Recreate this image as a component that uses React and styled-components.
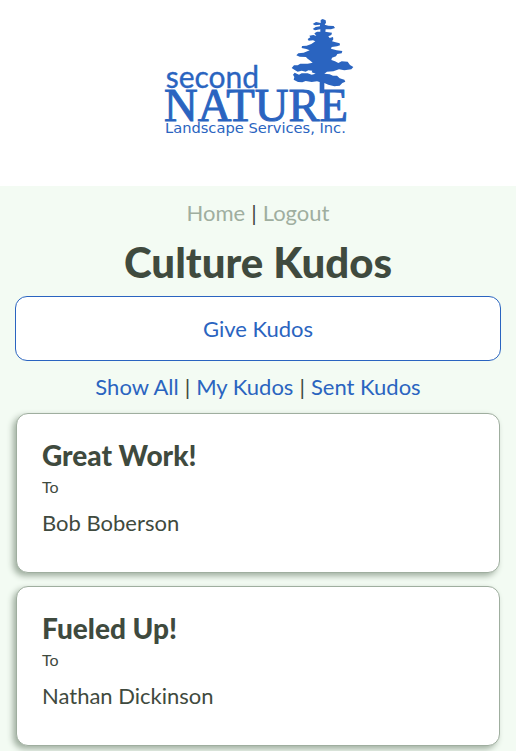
import React from "react";
import styled, { createGlobalStyle, ThemeProvider } from "styled-components";

const theme = {
  blue: "#2a64c0",
  ink: "#3f4a3e",
  sage: "#9fae9f",
  mint: "#f3fbf3",
  white: "#ffffff",
};

const GlobalStyle = createGlobalStyle`
  *, *::before, *::after { box-sizing: border-box; }
  body {
    margin: 0;
    background: ${theme.mint};
    color: ${theme.ink};
    font-family: Lato, "Gill Sans", sans-serif;
    font-size: 22px;
    line-height: 30px;
  }
`;

const Header = styled.header`
  display: flex;
  justify-content: center;
  padding: 10px 0 41px;
  background: ${(p) => p.theme.white};
`;

const LogoArt = styled.svg`
  display: block;
  width: 206px;
  height: 135px;
  fill: ${(p) => p.theme.blue};
`;

const LogoText = styled.text`
  font-family: ${(p) => p.$family};
  font-size: ${(p) => p.$size}px;
  stroke: ${(p) => p.theme.blue};
  stroke-width: ${(p) => p.$weight || 0};
`;

const Main = styled.main`
  display: flex;
  flex-direction: column;
  padding: 12px 15px;
`;

const LinkBar = styled.nav`
  display: flex;
  justify-content: center;
  gap: 6px;
`;

const BarLink = styled.a`
  color: ${(p) => (p.$muted ? p.theme.sage : p.theme.blue)};
  text-decoration: none;
`;

const Title = styled.h1`
  margin: 8px 0;
  font-size: 42px;
  font-weight: 900;
  line-height: 52px;
  text-align: center;
`;

const GiveButton = styled.button`
  height: 65px;
  margin-bottom: 11px;
  border: 1px solid ${(p) => p.theme.blue};
  border-radius: 12px;
  background: ${(p) => p.theme.white};
  color: ${(p) => p.theme.blue};
  font: inherit;
  cursor: pointer;
`;

const CardList = styled.ul`
  display: flex;
  flex-direction: column;
  gap: 13px;
  margin: 11px 1px 0;
  padding: 0;
  list-style: none;
`;

const Card = styled.li`
  padding: 24px 25px 34px;
  border: 1px solid ${(p) => p.theme.sage};
  border-radius: 12px;
  background: ${(p) => p.theme.white};
  box-shadow: -3px 3px 6px ${(p) => p.theme.sage};
`;

const CardTitle = styled.h2`
  margin: 0;
  font-size: 28px;
  font-weight: 900;
  line-height: 34px;
`;

const Label = styled.p`
  margin: 0 0 6px;
  font-size: 16px;
  line-height: 30px;
`;

const Name = styled.p`
  margin: 0;
`;

function Logo() {
  return (
    <LogoArt viewBox="0 0 618 405" role="img" aria-label="Second Nature Landscape Services, Inc.">
      <path d="M497 30 L503 27 L512 31 L513 38 L509 44 L520 47 L536 48 L540 54 L528 58 L512 58 L511 65 L520 67 L531 68 L529 75 L520 79 L524 84 L534 81 L535 88 L531 94 L542 97 L554 100 L555 106 L546 109 L530 111 L528 116 L545 121 L562 123 L560 130 L547 132 L543 139 L531 143 L529 150 L540 154 L550 159 L560 154 L578 155 L585 165 L595 171 L589 178 L568 181 L552 178 L535 184 L516 185 L508 191 L524 193 L534 197 L546 197 L554 205 L568 209 L571 215 L562 219 L554 227 L538 229 L520 224 L508 219 L508 250 L494 250 L494 216 L486 214 L470 216 L452 213 L442 217 L429 216 L416 209 L418 201 L414 194 L419 188 L432 194 L440 190 L458 190 L470 194 L482 191 L470 187 L472 182 L460 181 L452 185 L440 182 L428 185 L418 179 L410 174 L417 166 L428 166 L436 161 L458 161 L473 158 L466 152 L456 145 L453 141 L434 140 L424 136 L430 130 L446 128 L464 121 L454 117 L440 114 L441 108 L455 107 L469 102 L481 94 L474 91 L461 92 L458 87 L466 82 L463 77 L475 75 L484 78 L478 70 L486 65 L496 65 L496 58 L480 61 L473 57 L482 51 L495 49 L495 44 L480 46 L473 42 L483 36 L497 39 Z" />
      <LogoText x="32" y="235" $family="Lato, sans-serif" $size={90} $weight={1}>second</LogoText>
      <LogoText x="27" y="334" $family="'Liberation Serif', serif" $size={140} $weight={3}>NATURE</LogoText>
      <LogoText x="30" y="370" $family="'DejaVu Sans', sans-serif" $size={44}>Landscape Services, Inc.</LogoText>
    </LogoArt>
  );
}

const kudos = [
  { title: "Great Work!", to: "Bob Boberson" },
  { title: "Fueled Up!", to: "Nathan Dickinson" },
];

export default function App() {
  return (
    <ThemeProvider theme={theme}>
      <GlobalStyle />
      <Header>
        <Logo />
      </Header>
      <Main>
        <LinkBar aria-label="Account">
          <BarLink $muted href="#home">Home</BarLink>
          <span>|</span>
          <BarLink $muted href="#logout">Logout</BarLink>
        </LinkBar>
        <Title>Culture Kudos</Title>
        <GiveButton type="button">Give Kudos</GiveButton>
        <LinkBar aria-label="Kudos filter">
          <BarLink href="#all">Show All</BarLink>
          <span>|</span>
          <BarLink href="#mine">My Kudos</BarLink>
          <span>|</span>
          <BarLink href="#sent">Sent Kudos</BarLink>
        </LinkBar>
        <CardList>
          {kudos.map((k) => (
            <Card key={k.title}>
              <CardTitle>{k.title}</CardTitle>
              <Label>To</Label>
              <Name>{k.to}</Name>
            </Card>
          ))}
        </CardList>
      </Main>
    </ThemeProvider>
  );
}
